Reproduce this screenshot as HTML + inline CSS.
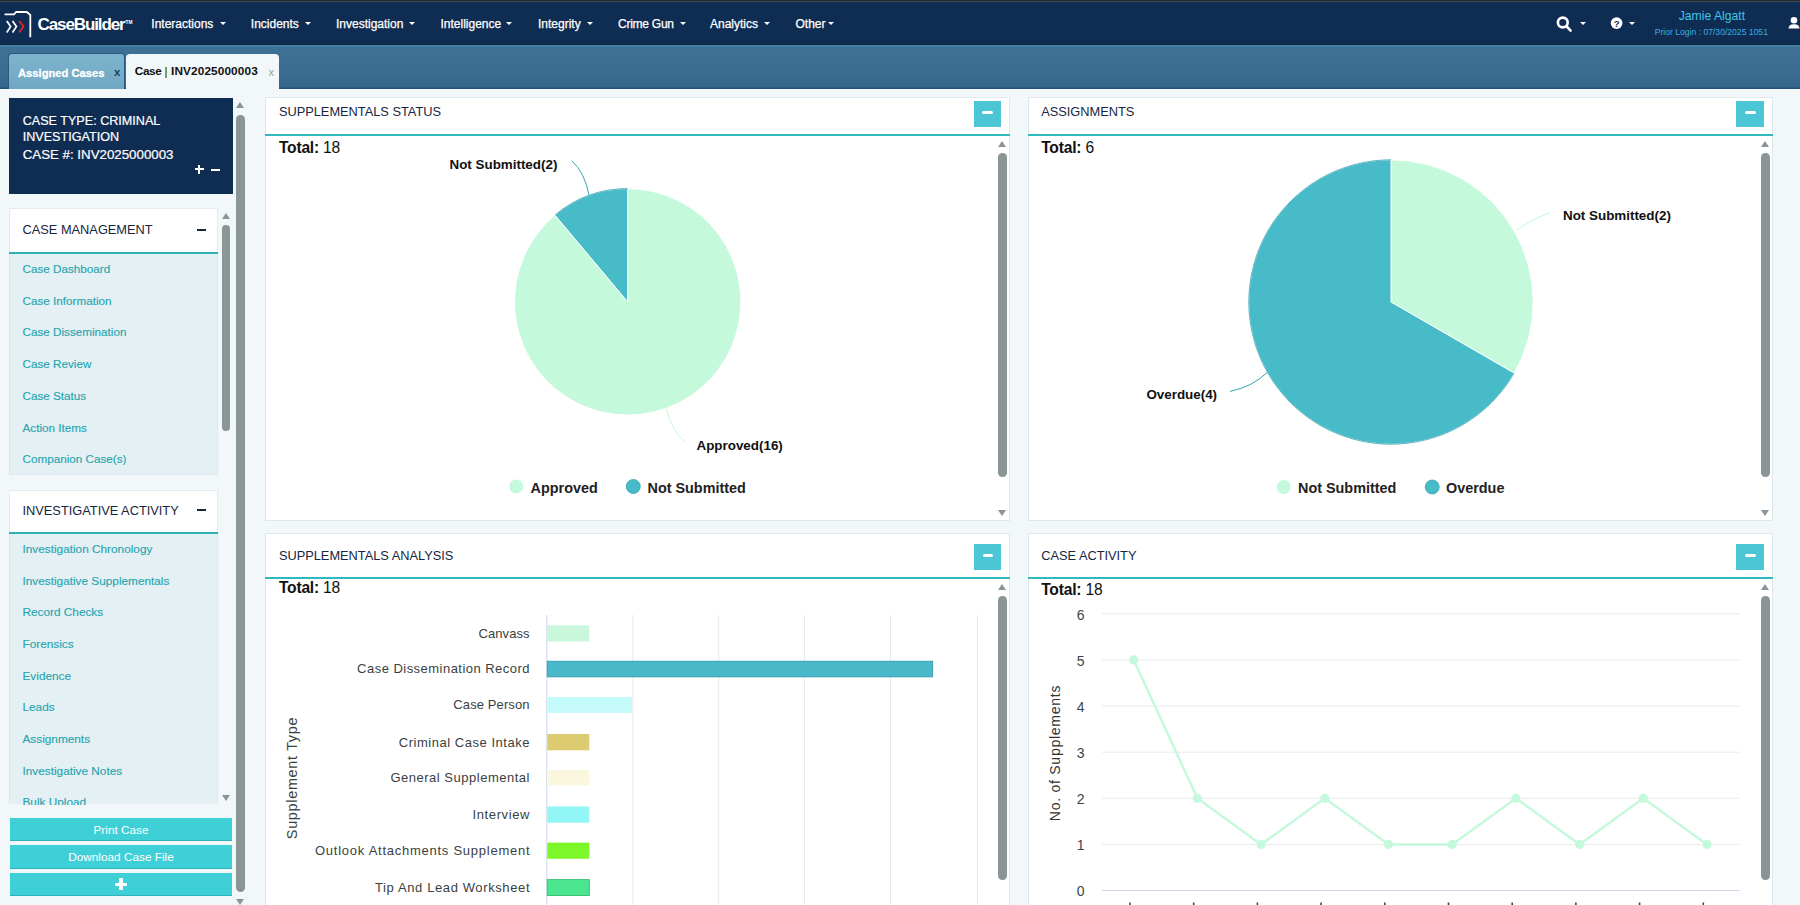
<!DOCTYPE html>
<html><head><meta charset="utf-8">
<style>
*{margin:0;padding:0;box-sizing:border-box}
html,body{width:1800px;height:905px;overflow:hidden;background:#f2f7fa;font-family:"Liberation Sans",sans-serif}
.a{position:absolute}
.t{position:absolute;white-space:pre;line-height:1}
</style></head><body>
<div class="a" style="left:0px;top:0px;width:1800px;height:1px;background:#23282e"></div>
<div class="a" style="left:0px;top:1px;width:1800px;height:1px;background:#3d4a58"></div>
<div class="a" style="left:0px;top:2px;width:1800px;height:43px;background:#0f2c52"></div>
<div class="a" style="left:0px;top:44px;width:1800px;height:1px;background:#0b2442"></div>
<svg class="a" style="left:0;top:0" width="140" height="45" viewBox="0 0 140 45">
<g fill="none" stroke-linecap="square" stroke-linejoin="miter">
<path d="M5.5 14.3 H14 L16.2 12 H26.8 L30.3 15 V36.3" stroke="#fff" stroke-width="1.8"/>
<path d="M7.2 21.6 L10.6 26.6 L7.2 31.8" stroke="#fff" stroke-width="1.7"/>
<path d="M13 21.6 L16.4 26.6 L13 31.8" stroke="#fff" stroke-width="1.7"/>
<path d="M19.6 21.6 L23.6 26.6 L19.6 31.8" stroke="#e8242a" stroke-width="1.7"/>
</g></svg>
<div class="t" style="top:15.71px;font-size:17px;color:#fff;font-weight:bold;letter-spacing:-1.1px;left:37.5px;">CaseBuilder</div>
<div class="t" style="top:21.24px;font-size:4.8px;color:#fff;font-weight:bold;left:125.5px;">TM</div>
<div class="t" style="top:17.94px;font-size:12px;color:#fff;left:151.3px;-webkit-text-stroke:0.25px #fff;">Interactions</div>
<div class="a" style="left:219.5px;top:21.8px;width:0px;height:0px;border-left:3px solid transparent;border-right:3px solid transparent;border-top:3px solid #fff"></div>
<div class="t" style="top:17.94px;font-size:12px;color:#fff;left:250.8px;-webkit-text-stroke:0.25px #fff;">Incidents</div>
<div class="a" style="left:305px;top:21.8px;width:0px;height:0px;border-left:3px solid transparent;border-right:3px solid transparent;border-top:3px solid #fff"></div>
<div class="t" style="top:17.94px;font-size:12px;color:#fff;left:336px;-webkit-text-stroke:0.25px #fff;">Investigation</div>
<div class="a" style="left:409px;top:21.8px;width:0px;height:0px;border-left:3px solid transparent;border-right:3px solid transparent;border-top:3px solid #fff"></div>
<div class="t" style="top:17.94px;font-size:12px;color:#fff;left:440.5px;-webkit-text-stroke:0.25px #fff;">Intelligence</div>
<div class="a" style="left:506.2px;top:21.8px;width:0px;height:0px;border-left:3px solid transparent;border-right:3px solid transparent;border-top:3px solid #fff"></div>
<div class="t" style="top:17.94px;font-size:12px;color:#fff;left:538px;-webkit-text-stroke:0.25px #fff;">Integrity</div>
<div class="a" style="left:587px;top:21.8px;width:0px;height:0px;border-left:3px solid transparent;border-right:3px solid transparent;border-top:3px solid #fff"></div>
<div class="t" style="top:17.94px;font-size:12px;color:#fff;letter-spacing:-0.25px;left:618px;-webkit-text-stroke:0.25px #fff;">Crime Gun</div>
<div class="a" style="left:679.5px;top:21.8px;width:0px;height:0px;border-left:3px solid transparent;border-right:3px solid transparent;border-top:3px solid #fff"></div>
<div class="t" style="top:17.94px;font-size:12px;color:#fff;left:710px;-webkit-text-stroke:0.25px #fff;">Analytics</div>
<div class="a" style="left:763.7px;top:21.8px;width:0px;height:0px;border-left:3px solid transparent;border-right:3px solid transparent;border-top:3px solid #fff"></div>
<div class="t" style="top:17.94px;font-size:12px;color:#fff;left:795.5px;-webkit-text-stroke:0.25px #fff;">Other</div>
<div class="a" style="left:827.5px;top:21.8px;width:0px;height:0px;border-left:3px solid transparent;border-right:3px solid transparent;border-top:3px solid #fff"></div>
<svg class="a" style="left:1550px;top:10px" width="30" height="26" viewBox="0 0 30 26">
<circle cx="12.8" cy="12.5" r="4.9" fill="none" stroke="#fff" stroke-width="2.6"/>
<path d="M16.4 16.2 L20.6 20.6" stroke="#fff" stroke-width="2.6" stroke-linecap="round"/></svg>
<div class="a" style="left:1579.7px;top:21.5px;width:0px;height:0px;border-left:3px solid transparent;border-right:3px solid transparent;border-top:3px solid #fff"></div>
<svg class="a" style="left:1605px;top:12px" width="22" height="22" viewBox="0 0 22 22">
<circle cx="11.6" cy="11.1" r="5.9" fill="#fff"/>
<text x="11.6" y="14.6" font-family="Liberation Sans" font-weight="bold" font-size="9.5" fill="#0f2c52" text-anchor="middle">?</text></svg>
<div class="a" style="left:1629px;top:21.5px;width:0px;height:0px;border-left:3px solid transparent;border-right:3px solid transparent;border-top:3px solid #fff"></div>
<div class="t" style="top:10.47px;font-size:12.2px;color:#3fc3e6;left:1678.7px;">Jamie Algatt</div>
<div class="t" style="top:27.72px;font-size:8.6px;color:#3aaee0;left:1654.7px;">Prior Login : 07/30/2025 1051</div>
<svg class="a" style="left:1785px;top:14px" width="15" height="18" viewBox="0 0 15 18">
<circle cx="9" cy="6.2" r="3.3" fill="#fff"/><path d="M3.5 14.5 Q3.5 10.2 9 10.2 Q14.5 10.2 14.5 14.5 Z" fill="#fff"/></svg>
<div class="a" style="left:0px;top:45px;width:1800px;height:44px;background:linear-gradient(180deg,#4a83a6 0px,#4a83a6 1px,#3e7196 2px,#3a6c91 30px,#33658b 42px,#24507a 43px,#24507a 44px)"></div>
<div class="a" style="left:7.5px;top:52.8px;width:117.5px;height:36.2px;background:linear-gradient(180deg,#7db4cc,#70a8c3);border:1px solid #2b5a80;border-bottom:none;border-radius:4px 4px 0 0"></div>
<div class="t" style="top:67.52px;font-size:11.2px;color:#fff;font-weight:bold;left:18px;-webkit-text-stroke:0.3px #fff;">Assigned Cases</div>
<div class="t" style="top:67.27px;font-size:11.5px;color:#1d3f62;font-weight:bold;left:114px;">x</div>
<div class="a" style="left:126px;top:54px;width:153px;height:35px;background:#f2f7fa;border-radius:4px 4px 0 0"></div>
<div class="t" style="top:66.31px;font-size:11.8px;color:#111;font-weight:bold;letter-spacing:-0.4px;left:134.8px;">Case</div>
<div class="a" style="left:165.4px;top:67px;width:1.3px;height:10.5px;background:#6aa472"></div>
<div class="t" style="top:66.31px;font-size:11.8px;color:#111;font-weight:bold;letter-spacing:0.12px;left:171px;">INV2025000003</div>
<div class="t" style="top:67.49px;font-size:11px;color:#9aa5ab;left:268.5px;">x</div>
<div class="a" style="left:0px;top:89px;width:1800px;height:816px;background:#f2f7fa"></div>
<div class="a" style="left:9px;top:98px;width:223.5px;height:96px;background:#0f2c52"></div>
<div class="t" style="top:114.63px;font-size:12.6px;color:#fff;left:22.7px;-webkit-text-stroke:0.2px #fff;">CASE TYPE: CRIMINAL</div>
<div class="t" style="top:131.33px;font-size:12.6px;color:#fff;left:22.7px;-webkit-text-stroke:0.2px #fff;">INVESTIGATION</div>
<div class="t" style="top:148.04px;font-size:13.3px;color:#fff;left:22.7px;-webkit-text-stroke:0.2px #fff;">CASE #: INV2025000003</div>
<div class="a" style="left:195px;top:168.2px;width:8.5px;height:2px;background:#fff"></div>
<div class="a" style="left:198.2px;top:165px;width:2px;height:8.5px;background:#fff"></div>
<div class="a" style="left:211px;top:168.5px;width:9px;height:2px;background:#fff"></div>
<div class="a" style="left:236.0px;top:102px;width:0px;height:0px;border-left:4.5px solid transparent;border-right:4.5px solid transparent;border-bottom:6px solid #8a9595"></div>
<div class="a" style="left:236.2px;top:115px;width:8.8px;height:776.5px;background:#8a9595;border-radius:4.4px"></div>
<div class="a" style="left:236.0px;top:899px;width:0px;height:0px;border-left:4.5px solid transparent;border-right:4.5px solid transparent;border-top:6px solid #8a9595"></div>
<div class="a" style="left:9.3px;top:208.3px;width:209px;height:267.2px;background:#e5f0f5;border:1px solid #dde8ee;border-top:none"></div>
<div class="a" style="left:9.3px;top:208.3px;width:209px;height:44.19999999999999px;background:#fff;border:1px solid #e3ebef;border-bottom:none"></div>
<div class="a" style="left:9.3px;top:251.5px;width:209px;height:2.2px;background:#2eb2b6"></div>
<div class="t" style="top:224.26px;font-size:12.8px;color:#17263f;left:22.5px;">CASE MANAGEMENT</div>
<div class="a" style="left:197px;top:228.8px;width:8.5px;height:2.2px;background:#17263f"></div>
<div class="t" style="top:263.00px;font-size:11.7px;color:#27a6ae;left:22.5px;-webkit-text-stroke:0.15px #27a6ae;">Case Dashboard</div>
<div class="t" style="top:294.70px;font-size:11.7px;color:#27a6ae;left:22.5px;-webkit-text-stroke:0.15px #27a6ae;">Case Information</div>
<div class="t" style="top:326.40px;font-size:11.7px;color:#27a6ae;left:22.5px;-webkit-text-stroke:0.15px #27a6ae;">Case Dissemination</div>
<div class="t" style="top:358.10px;font-size:11.7px;color:#27a6ae;left:22.5px;-webkit-text-stroke:0.15px #27a6ae;">Case Review</div>
<div class="t" style="top:389.80px;font-size:11.7px;color:#27a6ae;left:22.5px;-webkit-text-stroke:0.15px #27a6ae;">Case Status</div>
<div class="t" style="top:421.50px;font-size:11.7px;color:#27a6ae;left:22.5px;-webkit-text-stroke:0.15px #27a6ae;">Action Items</div>
<div class="t" style="top:453.20px;font-size:11.7px;color:#27a6ae;left:22.5px;-webkit-text-stroke:0.15px #27a6ae;">Companion Case(s)</div>
<div class="a" style="left:221.5px;top:213px;width:0px;height:0px;border-left:4.5px solid transparent;border-right:4.5px solid transparent;border-bottom:6px solid #8a9595"></div>
<div class="a" style="left:221.6px;top:225px;width:8.8px;height:206px;background:#8a9595;border-radius:4.4px"></div>
<div class="a" style="left:9.3px;top:490.3px;width:209px;height:314.2px;background:#e5f0f5;border-left:1px solid #dde8ee;border-right:1px solid #dde8ee"></div>
<div class="a" style="left:9.3px;top:490.3px;width:209px;height:42.7px;background:#fff;border:1px solid #e3ebef;border-bottom:none"></div>
<div class="a" style="left:9.3px;top:532px;width:209px;height:2.2px;background:#2eb2b6"></div>
<div class="t" style="top:504.96px;font-size:12.8px;color:#17263f;left:22.5px;">INVESTIGATIVE ACTIVITY</div>
<div class="a" style="left:197px;top:509px;width:8.5px;height:2.2px;background:#17263f"></div>
<div class="t" style="top:543.81px;font-size:11.8px;color:#27a6ae;left:22.5px;-webkit-text-stroke:0.15px #27a6ae;">Investigation Chronology</div>
<div class="t" style="top:575.51px;font-size:11.8px;color:#27a6ae;left:22.5px;-webkit-text-stroke:0.15px #27a6ae;">Investigative Supplementals</div>
<div class="t" style="top:607.21px;font-size:11.8px;color:#27a6ae;left:22.5px;-webkit-text-stroke:0.15px #27a6ae;">Record Checks</div>
<div class="t" style="top:638.91px;font-size:11.8px;color:#27a6ae;left:22.5px;-webkit-text-stroke:0.15px #27a6ae;">Forensics</div>
<div class="t" style="top:670.61px;font-size:11.8px;color:#27a6ae;left:22.5px;-webkit-text-stroke:0.15px #27a6ae;">Evidence</div>
<div class="t" style="top:702.31px;font-size:11.8px;color:#27a6ae;left:22.5px;-webkit-text-stroke:0.15px #27a6ae;">Leads</div>
<div class="t" style="top:734.01px;font-size:11.8px;color:#27a6ae;left:22.5px;-webkit-text-stroke:0.15px #27a6ae;">Assignments</div>
<div class="t" style="top:765.71px;font-size:11.8px;color:#27a6ae;left:22.5px;-webkit-text-stroke:0.15px #27a6ae;">Investigative Notes</div>
<div class="t" style="top:797.41px;font-size:11.8px;color:#27a6ae;left:22.5px;-webkit-text-stroke:0.15px #27a6ae;">Bulk Upload</div>
<div class="a" style="left:221.5px;top:795px;width:0px;height:0px;border-left:4.5px solid transparent;border-right:4.5px solid transparent;border-top:6px solid #8a9595"></div>
<div class="a" style="left:8.3px;top:804.5px;width:225px;height:101px;background:#f2f7fa"></div>
<div class="a" style="left:9.6px;top:818px;width:222.8px;height:23px;background:#3fcfd6;border-bottom:1.5px solid #2eb3bb"></div>
<div class="t" style="top:824.81px;font-size:11.8px;color:#fff;left:121px;transform:translateX(-50%);">Print Case</div>
<div class="a" style="left:9.6px;top:845.4px;width:222.8px;height:23.3px;background:#3fcfd6;border-bottom:1.5px solid #2eb3bb"></div>
<div class="t" style="top:852.21px;font-size:11.8px;color:#fff;left:121px;transform:translateX(-50%);">Download Case File</div>
<div class="a" style="left:9.6px;top:873px;width:222.8px;height:23.2px;background:#3fcfd6;border-bottom:1.5px solid #2eb3bb"></div>
<div class="a" style="left:115px;top:882.5px;width:12.4px;height:3.6px;background:#fff;border-radius:1px"></div>
<div class="a" style="left:119.4px;top:878.3px;width:3.6px;height:11.5px;background:#fff;border-radius:1px"></div>
<div class="a" style="left:265.4px;top:97px;width:744.6px;height:424px;background:#fff;border:1px solid #dfe8ec"></div>
<div class="t" style="top:105.76px;font-size:12.8px;color:#17263f;left:278.9px;">SUPPLEMENTALS STATUS</div>
<div class="a" style="left:265.4px;top:133.5px;width:744.6px;height:2px;background:#2fb8bd"></div>
<div class="t" style="top:139.89px;font-size:15.6px;color:#111;letter-spacing:-0.2px;left:278.9px;"><b>Total:</b> 18</div>
<div class="a" style="left:1027.7px;top:97px;width:745.3px;height:424px;background:#fff;border:1px solid #dfe8ec"></div>
<div class="t" style="top:105.56px;font-size:12.8px;color:#17263f;left:1041.2px;">ASSIGNMENTS</div>
<div class="a" style="left:1027.7px;top:133.5px;width:745.3px;height:2px;background:#2fb8bd"></div>
<div class="t" style="top:139.59px;font-size:15.6px;color:#111;letter-spacing:-0.2px;left:1041.2px;"><b>Total:</b> 6</div>
<div class="a" style="left:265.4px;top:533px;width:744.6px;height:380px;background:#fff;border:1px solid #dfe8ec"></div>
<div class="t" style="top:549.96px;font-size:12.8px;color:#17263f;left:278.9px;">SUPPLEMENTALS ANALYSIS</div>
<div class="a" style="left:265.4px;top:576.7px;width:744.6px;height:2px;background:#2fb8bd"></div>
<div class="t" style="top:579.99px;font-size:15.6px;color:#111;letter-spacing:-0.2px;left:278.9px;"><b>Total:</b> 18</div>
<div class="a" style="left:1027.7px;top:533px;width:745.3px;height:380px;background:#fff;border:1px solid #dfe8ec"></div>
<div class="t" style="top:549.66px;font-size:12.8px;color:#17263f;left:1041.2px;">CASE ACTIVITY</div>
<div class="a" style="left:1027.7px;top:576.7px;width:745.3px;height:2px;background:#2fb8bd"></div>
<div class="t" style="top:581.79px;font-size:15.6px;color:#111;letter-spacing:-0.2px;left:1041.2px;"><b>Total:</b> 18</div>
<div class="a" style="left:973.5px;top:100.7px;width:27.4px;height:26.5px;background:#4cc6d5"></div>
<div class="a" style="left:982.2px;top:110.7px;width:10.5px;height:3.3px;background:#fff;border-radius:1.5px"></div>
<div class="a" style="left:1736.3px;top:100.7px;width:27.4px;height:26.5px;background:#4cc6d5"></div>
<div class="a" style="left:1745.0px;top:110.7px;width:10.5px;height:3.3px;background:#fff;border-radius:1.5px"></div>
<div class="a" style="left:973.8px;top:543.9px;width:27.4px;height:26.5px;background:#4cc6d5"></div>
<div class="a" style="left:982.5px;top:553.9px;width:10.5px;height:3.3px;background:#fff;border-radius:1.5px"></div>
<div class="a" style="left:1736.3px;top:543.9px;width:27.4px;height:26.5px;background:#4cc6d5"></div>
<div class="a" style="left:1745.0px;top:553.9px;width:10.5px;height:3.3px;background:#fff;border-radius:1.5px"></div>
<div class="a" style="left:998.0999999999999px;top:141px;width:0px;height:0px;border-left:4.5px solid transparent;border-right:4.5px solid transparent;border-bottom:6px solid #8a9595"></div>
<div class="a" style="left:998.3px;top:152.7px;width:8.6px;height:324.5px;background:#8a9595;border-radius:4.3px"></div>
<div class="a" style="left:998.0999999999999px;top:510px;width:0px;height:0px;border-left:4.5px solid transparent;border-right:4.5px solid transparent;border-top:6px solid #8a9595"></div>
<div class="a" style="left:998.0999999999999px;top:584px;width:0px;height:0px;border-left:4.5px solid transparent;border-right:4.5px solid transparent;border-bottom:6px solid #8a9595"></div>
<div class="a" style="left:998.3px;top:596px;width:8.6px;height:283.6px;background:#8a9595;border-radius:4.3px"></div>
<div class="a" style="left:1760.8px;top:141px;width:0px;height:0px;border-left:4.5px solid transparent;border-right:4.5px solid transparent;border-bottom:6px solid #8a9595"></div>
<div class="a" style="left:1761px;top:152.7px;width:8.6px;height:324.5px;background:#8a9595;border-radius:4.3px"></div>
<div class="a" style="left:1760.8px;top:510px;width:0px;height:0px;border-left:4.5px solid transparent;border-right:4.5px solid transparent;border-top:6px solid #8a9595"></div>
<div class="a" style="left:1760.8px;top:584px;width:0px;height:0px;border-left:4.5px solid transparent;border-right:4.5px solid transparent;border-bottom:6px solid #8a9595"></div>
<div class="a" style="left:1761px;top:596px;width:8.6px;height:283.6px;background:#8a9595;border-radius:4.3px"></div>
<svg class="a" style="left:0;top:0" width="1800" height="905" viewBox="0 0 1800 905">
<path d="M627.70 301.80 L627.70 188.60 A113.2 113.2 0 1 1 554.94 215.08 Z" fill="#c5f9db" stroke="#fff" stroke-width="1"/>
<path d="M627.70 301.80 L554.94 215.08 A113.2 113.2 0 0 1 627.70 188.60 Z" fill="#47bbc7" stroke="#fff" stroke-width="1"/>
<path d="M554.94 215.08 A113.2 113.2 0 0 1 627.7 188.60000000000002" fill="none" stroke="#36a2b0" stroke-width="0.8"/>
<path d="M571.8 160.8 Q585 173 589 195" fill="none" stroke="#36a2b0" stroke-width="1"/>
<path d="M666.6 409 Q672 432 685.5 442" fill="none" stroke="#c5f9db" stroke-width="1"/>
<path d="M1391.00 302.00 L1391.00 159.80 A142.2 142.2 0 0 1 1514.15 373.10 Z" fill="#c5f9db" stroke="#fff" stroke-width="1"/>
<path d="M1391.00 302.00 L1514.15 373.10 A142.2 142.2 0 1 1 1391.00 159.80 Z" fill="#47bbc7" stroke="#fff" stroke-width="1"/>
<path d="M1514.15 373.10 A142.2 142.2 0 1 1 1391 159.8" fill="none" stroke="#36a2b0" stroke-width="0.8"/>
<path d="M1515.3 230.5 Q1532 219 1550.5 212.3" fill="none" stroke="#c5f9db" stroke-width="1"/>
<path d="M1230 391.4 Q1252 387 1267 372.6" fill="none" stroke="#36a2b0" stroke-width="1"/>
<circle cx="516.3" cy="486.5" r="7" fill="#c5f9db"/>
<circle cx="633.3" cy="486.5" r="7" fill="#47bbc7" stroke="#36a2b0" stroke-width="0.8"/>
<circle cx="1283.8" cy="487" r="7" fill="#c5f9db"/>
<circle cx="1432.2" cy="487" r="7" fill="#47bbc7" stroke="#36a2b0" stroke-width="0.8"/>
<rect x="632.3" y="615" width="1" height="290" fill="#e6e9ec"/>
<rect x="718.2" y="615" width="1" height="290" fill="#e6e9ec"/>
<rect x="804.1" y="615" width="1" height="290" fill="#e6e9ec"/>
<rect x="890.0" y="615" width="1" height="290" fill="#e6e9ec"/>
<rect x="976.9" y="615" width="1" height="290" fill="#e6e9ec"/>
<rect x="546.3" y="615" width="1" height="290" fill="#ccd6eb"/>
</svg>
<svg class="a" style="left:0;top:0" width="1800" height="905" viewBox="0 0 1800 905">
<rect x="547.3" y="625.3" width="42.0" height="16.1" fill="#c8f7dc"/>
<rect x="547.3" y="661.3" width="385.3" height="15.5" fill="#49b8c8" stroke="#3a9fb2" stroke-width="1"/>
<rect x="547.3" y="697" width="84.7" height="15.9" fill="#c5fafa"/>
<rect x="547.3" y="734" width="42.0" height="16.3" fill="#dccb70"/>
<rect x="547.3" y="770" width="42.0" height="15.6" fill="#fbf7de"/>
<rect x="547.3" y="806.5" width="42.0" height="16.2" fill="#92f5f6"/>
<rect x="547.3" y="842.6" width="42.0" height="16.2" fill="#7cf82a"/>
<rect x="547.3" y="879.6" width="42.0" height="15.9" fill="#4ae58e" stroke="#3cc27a" stroke-width="1"/>
</svg>
<div class="t" style="top:626.75px;font-size:13px;color:#3a3f42;letter-spacing:0.07px;right:1270.4296875px;">Canvass</div>
<div class="t" style="top:662.45px;font-size:13px;color:#3a3f42;letter-spacing:0.47px;right:1270.0302083333333px;">Case Dissemination Record</div>
<div class="t" style="top:698.35px;font-size:13px;color:#3a3f42;letter-spacing:0.104px;right:1270.395625px;">Case Person</div>
<div class="t" style="top:735.55px;font-size:13px;color:#3a3f42;letter-spacing:0.529px;right:1269.9713815789473px;">Criminal Case Intake</div>
<div class="t" style="top:771.20px;font-size:13px;color:#3a3f42;letter-spacing:0.513px;right:1269.9873355263157px;">General Supplemental</div>
<div class="t" style="top:808.00px;font-size:13px;color:#3a3f42;letter-spacing:0.634px;right:1269.86640625px;">Interview</div>
<div class="t" style="top:844.10px;font-size:13px;color:#3a3f42;letter-spacing:0.743px;right:1269.7570043103449px;">Outlook Attachments Supplement</div>
<div class="t" style="top:880.95px;font-size:13px;color:#3a3f42;letter-spacing:0.612px;right:1269.888392857143px;">Tip And Lead Worksheet</div>
<div class="t" style="left:291.8px;top:778px;font-size:14.5px;color:#3a3f42;letter-spacing:0.65px;transform:translate(-50%,-50%) rotate(-90deg);line-height:1">Supplement Type</div>
<svg class="a" style="left:0;top:0" width="1800" height="905" viewBox="0 0 1800 905">
<rect x="1102" y="843.88" width="637.6" height="1" fill="#e6eaee"/>
<rect x="1102" y="797.76" width="637.6" height="1" fill="#e6eaee"/>
<rect x="1102" y="751.64" width="637.6" height="1" fill="#e6eaee"/>
<rect x="1102" y="705.52" width="637.6" height="1" fill="#e6eaee"/>
<rect x="1102" y="659.40" width="637.6" height="1" fill="#e6eaee"/>
<rect x="1102" y="613.28" width="637.6" height="1" fill="#e6eaee"/>
<rect x="1102" y="890.0" width="637.6" height="1" fill="#ccd6eb"/>
<path d="M1133.7 659.9 L1197.4 798.3 L1261.1 844.4 L1324.8 798.3 L1388.5 844.4 L1452.2 844.4 L1515.9 798.3 L1579.6 844.4 L1643.3 798.3 L1707.0 844.4" fill="none" stroke="#c5f9db" stroke-width="2.5" stroke-linejoin="round"/>
<circle cx="1133.7" cy="659.9" r="4.6" fill="#c5f9db"/>
<circle cx="1197.4" cy="798.3" r="4.6" fill="#c5f9db"/>
<circle cx="1261.1" cy="844.4" r="4.6" fill="#c5f9db"/>
<circle cx="1324.8" cy="798.3" r="4.6" fill="#c5f9db"/>
<circle cx="1388.5" cy="844.4" r="4.6" fill="#c5f9db"/>
<circle cx="1452.2" cy="844.4" r="4.6" fill="#c5f9db"/>
<circle cx="1515.9" cy="798.3" r="4.6" fill="#c5f9db"/>
<circle cx="1579.6" cy="844.4" r="4.6" fill="#c5f9db"/>
<circle cx="1643.3" cy="798.3" r="4.6" fill="#c5f9db"/>
<circle cx="1707.0" cy="844.4" r="4.6" fill="#c5f9db"/>
<rect x="1129.2" y="902.5" width="1.6" height="3" fill="#444"/>
<rect x="1192.9" y="902.5" width="1.6" height="3" fill="#444"/>
<rect x="1256.6" y="902.5" width="1.6" height="3" fill="#444"/>
<rect x="1320.3" y="902.5" width="1.6" height="3" fill="#444"/>
<rect x="1384.0" y="902.5" width="1.6" height="3" fill="#444"/>
<rect x="1447.7" y="902.5" width="1.6" height="3" fill="#444"/>
<rect x="1511.4" y="902.5" width="1.6" height="3" fill="#444"/>
<rect x="1575.1" y="902.5" width="1.6" height="3" fill="#444"/>
<rect x="1638.8" y="902.5" width="1.6" height="3" fill="#444"/>
<rect x="1702.5" y="902.5" width="1.6" height="3" fill="#444"/>
</svg>
<div class="t" style="top:884.45px;font-size:14px;color:#3d4547;right:715.5px;">0</div>
<div class="t" style="top:838.33px;font-size:14px;color:#3d4547;right:715.5px;">1</div>
<div class="t" style="top:792.21px;font-size:14px;color:#3d4547;right:715.5px;">2</div>
<div class="t" style="top:746.09px;font-size:14px;color:#3d4547;right:715.5px;">3</div>
<div class="t" style="top:699.97px;font-size:14px;color:#3d4547;right:715.5px;">4</div>
<div class="t" style="top:653.85px;font-size:14px;color:#3d4547;right:715.5px;">5</div>
<div class="t" style="top:607.73px;font-size:14px;color:#3d4547;right:715.5px;">6</div>
<div class="t" style="left:1055.3px;top:753.3px;font-size:14px;color:#333;letter-spacing:0.75px;transform:translate(-50%,-50%) rotate(-90deg);line-height:1">No. of Supplements</div>
<div class="t" style="top:157.96px;font-size:13.4px;color:#111;font-weight:bold;left:449.5px;">Not Submitted(2)</div>
<div class="t" style="top:439.16px;font-size:13.4px;color:#111;font-weight:bold;left:696.5px;">Approved(16)</div>
<div class="t" style="top:209.46px;font-size:13.4px;color:#111;font-weight:bold;left:1563px;">Not Submitted(2)</div>
<div class="t" style="top:387.96px;font-size:13.4px;color:#111;font-weight:bold;left:1146.4px;">Overdue(4)</div>
<div class="t" style="top:480.61px;font-size:14.4px;color:#222;font-weight:bold;left:530.6px;">Approved</div>
<div class="t" style="top:480.61px;font-size:14.4px;color:#222;font-weight:bold;left:647.5px;">Not Submitted</div>
<div class="t" style="top:481.11px;font-size:14.4px;color:#222;font-weight:bold;left:1298px;">Not Submitted</div>
<div class="t" style="top:481.11px;font-size:14.4px;color:#222;font-weight:bold;left:1446px;">Overdue</div>
</body></html>
